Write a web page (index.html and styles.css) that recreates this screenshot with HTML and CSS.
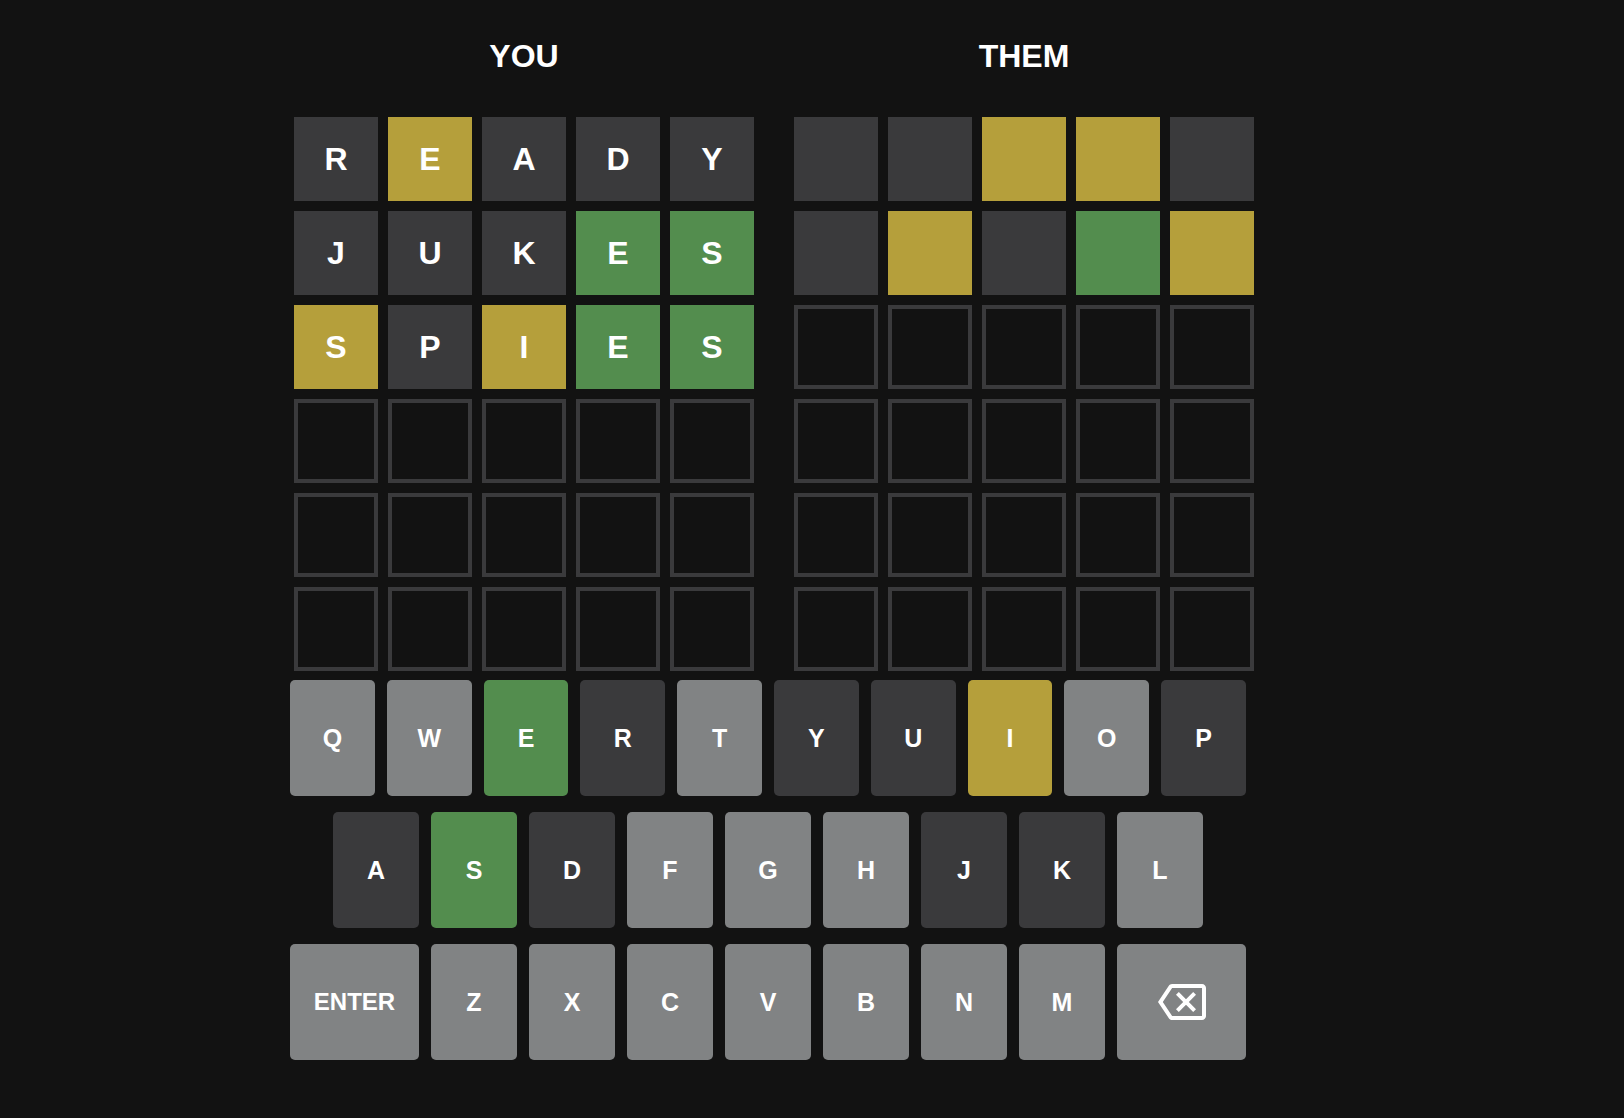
FILE: index.html
```html
<!DOCTYPE html>
<html>
<head>
<meta charset="utf-8">
<link rel="stylesheet" href="styles.css">
</head>
<body>
<div class="app">
  <div class="boards">
    <section class="board">
      <h2 class="title">YOU</h2>
      <div class="grid">
        <div class="tile absent">R</div><div class="tile present">E</div><div class="tile absent">A</div><div class="tile absent">D</div><div class="tile absent">Y</div>
        <div class="tile absent">J</div><div class="tile absent">U</div><div class="tile absent">K</div><div class="tile correct">E</div><div class="tile correct">S</div>
        <div class="tile present">S</div><div class="tile absent">P</div><div class="tile present">I</div><div class="tile correct">E</div><div class="tile correct">S</div>
        <div class="tile empty"></div><div class="tile empty"></div><div class="tile empty"></div><div class="tile empty"></div><div class="tile empty"></div>
        <div class="tile empty"></div><div class="tile empty"></div><div class="tile empty"></div><div class="tile empty"></div><div class="tile empty"></div>
        <div class="tile empty"></div><div class="tile empty"></div><div class="tile empty"></div><div class="tile empty"></div><div class="tile empty"></div>
      </div>
    </section>
    <section class="board">
      <h2 class="title">THEM</h2>
      <div class="grid">
        <div class="tile absent"></div><div class="tile absent"></div><div class="tile present"></div><div class="tile present"></div><div class="tile absent"></div>
        <div class="tile absent"></div><div class="tile present"></div><div class="tile absent"></div><div class="tile correct"></div><div class="tile present"></div>
        <div class="tile empty"></div><div class="tile empty"></div><div class="tile empty"></div><div class="tile empty"></div><div class="tile empty"></div>
        <div class="tile empty"></div><div class="tile empty"></div><div class="tile empty"></div><div class="tile empty"></div><div class="tile empty"></div>
        <div class="tile empty"></div><div class="tile empty"></div><div class="tile empty"></div><div class="tile empty"></div><div class="tile empty"></div>
        <div class="tile empty"></div><div class="tile empty"></div><div class="tile empty"></div><div class="tile empty"></div><div class="tile empty"></div>
      </div>
    </section>
  </div>
  <div class="keyboard">
    <div class="kb-row">
      <button class="key">Q</button><button class="key">W</button><button class="key correct">E</button><button class="key absent">R</button><button class="key">T</button><button class="key absent">Y</button><button class="key absent">U</button><button class="key present">I</button><button class="key">O</button><button class="key absent">P</button>
    </div>
    <div class="kb-row mid">
      <button class="key absent">A</button><button class="key correct">S</button><button class="key absent">D</button><button class="key">F</button><button class="key">G</button><button class="key">H</button><button class="key absent">J</button><button class="key absent">K</button><button class="key">L</button>
    </div>
    <div class="kb-row">
      <button class="key wide enter">ENTER</button><button class="key">Z</button><button class="key">X</button><button class="key">C</button><button class="key">V</button><button class="key">B</button><button class="key">N</button><button class="key">M</button>
      <button class="key wide" aria-label="backspace"><svg class="bs" width="48" height="48" viewBox="0 0 24 24"><path fill="#ffffff" d="M22 3H7c-.69 0-1.230.35-1.59.88L0 12l5.41 8.11c.36.53.9.89 1.59.89h15c1.1 0 2-.9 2-2V5c0-1.1-.9-2-2-2zm0 16H7.07L2.4 12l4.66-7H22v14zm-11.59-2L14 13.41 17.59 17 19 15.590 15.41 12 19 8.41 17.59 7 14 10.59 10.41 7 9 8.41 12.59 12 9 15.59z"/></svg></button>
    </div>
  </div>
</div>
</body>
</html>
```

FILE: styles.css
```css
html, body {
  margin: 0;
  padding: 0;
  background: #121212;
}
body {
  font-family: "Liberation Sans", Arial, sans-serif;
  color: #ffffff;
}
.app {
  padding-left: 290px;
  padding-top: 36px;
}
.boards {
  display: flex;
  gap: 40px;
  margin-left: 4px;
}
.board {
  display: flex;
  flex-direction: column;
  align-items: center;
}
.title {
  margin: 0 0 41px 0;
  font-size: 32px;
  line-height: 40px;
  font-weight: bold;
  color: #ffffff;
}
.grid {
  display: grid;
  grid-template-columns: repeat(5, 84px);
  grid-auto-rows: 84px;
  gap: 10px;
}
.tile {
  box-sizing: border-box;
  display: flex;
  align-items: center;
  justify-content: center;
  font-size: 32px;
  font-weight: bold;
  color: #ffffff;
}
.tile.absent { background: #3a3a3c; }
.tile.present { background: #b59f3b; }
.tile.correct { background: #538d4e; }
.tile.empty {
  border: 4px solid #3a3a3c;
}
.keyboard {
  width: 956px;
  margin-top: 9px;
  display: flex;
  flex-direction: column;
  gap: 16px;
}
.kb-row {
  display: flex;
  gap: 12px;
  height: 116px;
}
.kb-row.mid {
  padding: 0 43px;
}
.key {
  flex: 1 1 0;
  min-width: 0;
  border: 0;
  margin: 0;
  padding: 0;
  border-radius: 5px;
  background: #818384;
  color: #ffffff;
  font-family: "Liberation Sans", Arial, sans-serif;
  font-size: 25px;
  font-weight: bold;
  display: flex;
  align-items: center;
  justify-content: center;
}
.key.wide { flex: 1.5 1 0; }
.key.enter { font-size: 24px; }
.key.absent { background: #3a3a3c; }
.key.present { background: #b59f3b; }
.key.correct { background: #538d4e; }
.bs { display: block; }
```
